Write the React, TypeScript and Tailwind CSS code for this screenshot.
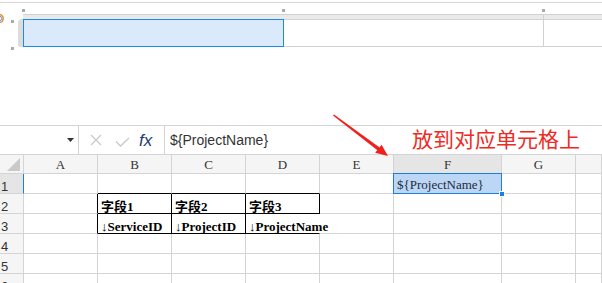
import React from "react";

type Col = { key: string; w: string };

const COLS: Col[] = [
  { key: "A", w: "w-[74px]" },
  { key: "B", w: "w-[74px]" },
  { key: "C", w: "w-[74px]" },
  { key: "D", w: "w-[74px]" },
  { key: "E", w: "w-[74px]" },
  { key: "F", w: "w-[108px]" },
  { key: "G", w: "w-[74px]" },
  { key: "H", w: "flex-1" },
];

const ROWS = [1, 2, 3, 4, 5, 6];

const CELLS: Record<string, string> = {
  B2: "字段1",
  C2: "字段2",
  D2: "字段3",
  B3: "↓ServiceID",
  C3: "↓ProjectID",
  D3: "↓ProjectName",
};

// cells framed by the black table border
const BLACK_RIGHT = ["A2", "A3", "B2", "C2", "D2", "B3", "C3"];
const BLACK_BOTTOM = ["B1", "C1", "D1", "B2", "C2", "D2", "B3", "C3", "D3"];

function Cell({ col, row }: { col: Col; row: number }) {
  const id = col.key + row;
  const right =
    id === "D3" ? "border-r-transparent" : BLACK_RIGHT.includes(id) ? "border-r-black" : "border-r-[#d4d4d4]";
  const bottom = BLACK_BOTTOM.includes(id) ? "border-b-black" : "border-b-[#d4d4d4]";
  const text = CELLS[id];

  if (id === "F1") {
    return (
      <div className={`${col.w} relative shrink-0 h-[20px] border-r border-b ${right} ${bottom}`}>
        <div className="absolute -left-px -top-px w-[109px] h-[21px] border border-[#1a7fe0] bg-[#bcd6f5] flex items-end pl-[3px] pb-[2px]">
          <span className="font-['Liberation_Serif',serif] text-[13px] leading-none text-[#1e2a3a] whitespace-nowrap">
            {"${ProjectName}"}
          </span>
        </div>
        <div className="absolute -right-[4px] -bottom-[4px] w-[6px] h-[6px] bg-[#1a7fe0] border border-white" />
      </div>
    );
  }

  return (
    <div
      className={`${col.w} shrink-0 h-[20px] border-r border-b ${right} ${bottom} flex items-end pl-[3px] ${
        id === "D3" ? "overflow-visible relative z-10" : "overflow-hidden"
      }`}
    >
      {text && (
        <span className="font-['Liberation_Serif','Noto_Sans_CJK_SC',serif] font-bold text-[13px] leading-none text-black whitespace-nowrap">
          {text}
        </span>
      )}
    </div>
  );
}

function TopPreview() {
  return (
    <div className="relative h-[123px]">
      <div className="mt-[2px] h-px bg-[#d6d6d6]" />
      <div className="ml-[18px] mt-[11px] flex">
        <div className="w-[5px] h-[28px] mt-[5px] rounded-tl-[4px] rounded-bl-[2px] bg-[#dcdcdc]" />
        <div className="flex-1 flex flex-col">
          <div className="h-[5px] border-t border-[#d2d2d2] bg-[#eaeaea] flex">
            <div className="w-[521px] border-r border-[#d2d2d2]" />
          </div>
          <div className="flex h-[28px]">
            <div className="w-[261px] border border-[#1e88e5] bg-[#dbeafb]" />
            <div className="w-[260px] border-t border-b border-r border-[#d2d2d2]" />
            <div className="flex-1 border-t border-b border-[#d2d2d2]" />
          </div>
        </div>
      </div>

      {/* resize handles */}
      <div className="absolute left-[22px] top-[7px] w-[3px] h-[3px] bg-[#ababab]" />
      <div className="absolute left-[282px] top-[7px] w-[3px] h-[3px] bg-[#ababab]" />
      <div className="absolute left-[542px] top-[7px] w-[3px] h-[3px] bg-[#ababab]" />
      <div className="absolute left-[11px] top-[18px] w-[3px] h-[3px] bg-[#ababab]" />
      <div className="absolute left-[11px] top-[45px] w-[3px] h-[3px] bg-[#ababab]" />
      <svg className="absolute left-0 top-[11px]" width="5" height="11" viewBox="0 0 5 11">
        <circle cx="-1" cy="5.5" r="4.2" fill="none" stroke="#e08a2c" strokeWidth="1.4" />
        <circle cx="-1" cy="5.5" r="2.6" fill="none" stroke="#4a6fb5" strokeWidth="0.8" />
      </svg>
    </div>
  );
}

function FormulaBar() {
  return (
    <div className="h-[30px] border-t border-b border-[#d4d4d4] flex bg-white">
      <div className="w-[79px] border-r border-[#d4d4d4] flex items-center justify-end pr-[4px]">
        <svg width="7" height="4" viewBox="0 0 7 4">
          <path d="M0 0H7L3.5 4Z" fill="#333" />
        </svg>
      </div>
      <div className="w-[86px] border-r border-[#d4d4d4] flex items-center pl-[10px]">
        <svg width="12" height="12" viewBox="0 0 12 12" className="ml-px">
          <path d="M1 1L11 11M11 1L1 11" stroke="#c9c9c9" strokeWidth="1.3" />
        </svg>
        <svg width="15" height="10" viewBox="0 0 15 10" className="ml-[13px] mt-[3px]">
          <path d="M1 4.5L5.5 9L14 1" stroke="#c9c9c9" strokeWidth="1.3" fill="none" />
        </svg>
        <span className="ml-[9px] font-['Liberation_Sans',sans-serif] italic text-[17px] leading-none text-[#1d3b72]">
          fx
        </span>
      </div>
      <div className="flex-1 flex items-center pl-[5px] font-['Liberation_Sans',sans-serif] text-[14px] text-[#333]">
        {"${ProjectName}"}
      </div>
    </div>
  );
}

export default function App() {
  return (
    <div className="relative w-[602px] h-[283px] overflow-hidden bg-white font-['Liberation_Sans',sans-serif]">
      <TopPreview />
      <FormulaBar />

      {/* column headers */}
      <div className="flex h-[19px] bg-[#f5f5f5]">
        <div className="w-[24px] shrink-0 border-r border-b border-[#d4d4d4] flex items-end justify-end pr-[3px] pb-[2px]">
          <svg width="13" height="13" viewBox="0 0 13 13">
            <path d="M13 0V13H0Z" fill="#c9c9c9" />
          </svg>
        </div>
        {COLS.map((c) => (
          <div
            key={c.key}
            className={`${c.w} shrink-0 border-r border-b border-r-[#d4d4d4] flex items-center justify-center font-['Liberation_Serif',serif] text-[13px] leading-[17px] text-[#333] ${
              c.key === "F" ? "bg-[#e5e5e5] border-b-[#a6a6a6]" : "border-b-[#d4d4d4]"
            }`}
          >
            {c.key === "H" ? "" : c.key}
          </div>
        ))}
      </div>

      {/* rows */}
      {ROWS.map((r) => (
        <div key={r} className="flex">
          <div
            className={`w-[24px] shrink-0 h-[20px] border-r border-b border-b-[#d4d4d4] flex items-end pl-px text-[13px] leading-none text-[#333] ${
              r === 1 ? "bg-[#e5e5e5] border-r-[#1a7fe0]" : "bg-[#f5f5f5] border-r-[#d4d4d4]"
            }`}
          >
            {r}
          </div>
          {COLS.map((c) => (
            <Cell key={c.key} col={c} row={r} />
          ))}
        </div>
      ))}

      {/* red annotation */}
      <svg className="absolute left-0 top-0 pointer-events-none" width="602" height="283">
        <polygon points="333,115.5 334,114.5 381,148.6 379,151.4" fill="#f0201c" />
        <polygon points="388,156 375.2,152.8 381.6,144.8" fill="#f0201c" />
      </svg>
      <div className="absolute left-[412px] top-[128px] font-['Noto_Sans_CJK_SC',sans-serif] text-[21px] leading-none text-[#ee2a24] whitespace-nowrap">
        放到对应单元格上
      </div>
    </div>
  );
}
